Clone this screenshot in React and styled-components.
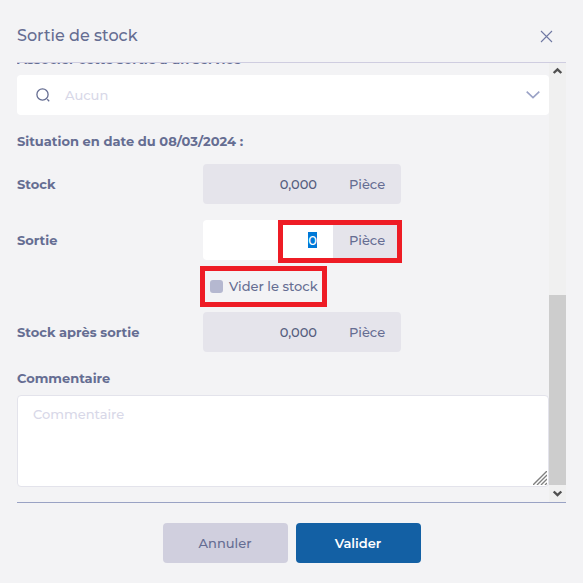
import React, { useEffect, useRef, useState } from "react";
import styled, { createGlobalStyle } from "styled-components";

const GlobalStyle = createGlobalStyle`
  * {
    box-sizing: border-box;
  }
  body {
    margin: 0;
    background: #f3f3f5;
    color: #656d92;
    font-family: Montserrat, Inter, sans-serif;
    font-size: 13px;
    font-weight: 500;
    line-height: 20px;
  }
  button,
  input,
  textarea {
    font: inherit;
  }
`;

const Modal = styled.div`
  height: 100vh;
  padding: 0 17px;
  display: flex;
  flex-direction: column;
`;
const Header = styled.header`
  height: 63px;
  padding: 10px 13px 0 0;
  display: flex;
  align-items: center;
  justify-content: space-between;
  border-bottom: 1px solid #cfcde0;
`;
const Title = styled.h1`
  margin: 0;
  font-size: 16px;
  font-weight: 500;
`;
const IconButton = styled.button`
  display: flex;
  padding: 0;
  border: 0;
  background: none;
  color: ${(p) => p.$color || "#6f78a2"};
`;
const Body = styled.main`
  flex: 1;
  min-height: 0;
  display: flex;
`;
const Content = styled.form`
  flex: 1;
  min-width: 0;
  padding-bottom: 15px;
  display: flex;
  flex-direction: column;
  justify-content: flex-end;
  overflow: hidden;
  & > * {
    flex-shrink: 0;
  }
`;
const Label = styled.label`
  font-weight: 700;
`;
const SelectBox = styled.div`
  height: 40px;
  margin: 6px 0 16px;
  padding: 0 9px 0 19px;
  display: flex;
  align-items: center;
  gap: 14px;
  border-radius: 4px;
  background: #fff;
`;
const SearchInput = styled.input`
  flex: 1;
  min-width: 0;
  padding: 0;
  border: 0;
  outline: none;
  background: none;
  color: #656d92;
  &::placeholder {
    color: #d8d8e8;
  }
`;
const Heading = styled.h2`
  margin: 0 0 13px;
  font-size: 13px;
  font-weight: 700;
  line-height: 20px;
`;
const Row = styled.div`
  display: grid;
  grid-template-columns: 186px 1fr;
  align-items: center;
`;
const SpacedRow = styled(Row)`
  margin-top: 16px;
`;
const Field = styled.div`
  position: relative;
  width: 198px;
  height: 40px;
  display: flex;
`;
const Amount = styled.input`
  width: 130px;
  padding: 0 16px;
  border: 0;
  border-radius: 4px 0 0 4px;
  outline: none;
  background: ${(p) => (p.readOnly ? "#e5e4eb" : "#fff")};
  color: #565e7e;
  line-height: 16px;
  text-align: right;
  &::selection {
    background: #0078d7;
    color: #fff;
  }
`;
const Unit = styled.span`
  flex: 1;
  display: flex;
  align-items: center;
  justify-content: center;
  border-radius: 0 4px 4px 0;
  background: #e5e4eb;
`;
const FieldMark = styled.div`
  position: absolute;
  top: 0;
  right: -1px;
  width: 124px;
  height: 43px;
  border: 5px solid #ee1c25;
  pointer-events: none;
`;
const CheckRow = styled.div`
  height: 52px;
  padding-left: 183px;
  display: flex;
  align-items: center;
`;
const CheckLabel = styled.label`
  width: 127px;
  height: 41px;
  padding-left: 5px;
  display: flex;
  align-items: center;
  gap: 6px;
  border: 5px solid #ee1c25;
  white-space: nowrap;
`;
const Checkbox = styled.input`
  appearance: none;
  width: 13px;
  height: 13px;
  margin: 0;
  flex-shrink: 0;
  border-radius: 3px;
  background: #b5b8d0;
  &:checked {
    background: #1360a4;
  }
`;
const CommentLabel = styled(Label)`
  margin-top: 16px;
`;
const CommentBox = styled.div`
  position: relative;
  margin-top: 7px;
  display: flex;
`;
const Comment = styled.textarea`
  width: 100%;
  height: 92px;
  padding: 8px 15px;
  border: 1px solid #e3e3eb;
  border-radius: 4px;
  outline: none;
  resize: none;
  background: #fff;
  color: #656d92;
  &::placeholder {
    color: #d8d8e8;
  }
`;
const Grip = styled.svg`
  position: absolute;
  right: 2px;
  bottom: 2px;
`;
const Scrollbar = styled.div`
  width: 17px;
  display: flex;
  flex-direction: column;
  align-items: center;
  background: #f0f0f0;
`;
const Track = styled.div`
  flex: 1;
  width: 100%;
  display: flex;
  flex-direction: column;
  justify-content: flex-end;
`;
const Thumb = styled.div`
  height: 47%;
  background: #cdcdcd;
`;
const Footer = styled.footer`
  height: 81px;
  padding-top: 20px;
  display: flex;
  justify-content: center;
  align-items: flex-start;
  gap: 8px;
  border-top: 1px solid #99a2c4;
`;
const Button = styled.button`
  width: 125px;
  height: 40px;
  border: 0;
  border-radius: 4px;
  font-weight: ${(p) => (p.$primary ? 600 : 500)};
  background: ${(p) => (p.$primary ? "#1360a4" : "#d0cfde")};
  color: ${(p) => (p.$primary ? "#fff" : "#656d92")};
`;

function ScrollArrow({ down }) {
  return (
    <IconButton type="button" $color="#505050" aria-label={down ? "Défiler vers le bas" : "Défiler vers le haut"}>
      <svg width="17" height="17" viewBox="0 0 17 17" fill="none" stroke="currentColor" strokeWidth="2.4">
        <path d={down ? "M4.7 6.5 8.5 10.2 12.3 6.5" : "M4.7 10 8.5 6.3 12.3 10"} />
      </svg>
    </IconButton>
  );
}

function AmountField({ mark, inputRef, ...props }) {
  return (
    <Field>
      <Amount ref={inputRef} {...props} />
      <Unit>Pièce</Unit>
      {mark && <FieldMark />}
    </Field>
  );
}

function App() {
  const [sortie, setSortie] = useState("0");
  const sortieRef = useRef(null);

  useEffect(() => {
    sortieRef.current.focus();
    sortieRef.current.select();
  }, []);

  return (
    <Modal>
      <GlobalStyle />
      <Header>
        <Title>Sortie de stock</Title>
        <IconButton type="button" aria-label="Fermer">
          <svg width="13" height="13" viewBox="0 0 13 13" fill="none" stroke="currentColor" strokeWidth="1.1">
            <path d="M1 1l11 11M12 1 1 12" />
          </svg>
        </IconButton>
      </Header>
      <Body>
        <Content id="sortie-form">
          <Label htmlFor="service">Associer cette sortie à un service</Label>
          <SelectBox>
            <svg width="15" height="15" viewBox="0 0 15 15" fill="none" stroke="#656d92" strokeWidth="1.3">
              <circle cx="6.5" cy="6.5" r="5.6" />
              <path d="M11.3 11.3 13.2 13.2" />
            </svg>
            <SearchInput id="service" placeholder="Aucun" />
            <svg width="14" height="8" viewBox="0 0 14 8" fill="none" stroke="#9aa2c6" strokeWidth="1.6">
              <path d="M.7.7 7 6.7 13.3.7" />
            </svg>
          </SelectBox>
          <Heading>Situation en date du 08/03/2024 :</Heading>
          <Row>
            <Label htmlFor="stock">Stock</Label>
            <AmountField id="stock" value="0,000" readOnly />
          </Row>
          <SpacedRow>
            <Label htmlFor="sortie">Sortie</Label>
            <AmountField
              id="sortie"
              mark
              inputRef={sortieRef}
              value={sortie}
              onChange={(e) => setSortie(e.target.value)}
            />
          </SpacedRow>
          <CheckRow>
            <CheckLabel>
              <Checkbox type="checkbox" />
              Vider le stock
            </CheckLabel>
          </CheckRow>
          <Row>
            <Label htmlFor="after">Stock après sortie</Label>
            <AmountField id="after" value="0,000" readOnly />
          </Row>
          <CommentLabel htmlFor="comment">Commentaire</CommentLabel>
          <CommentBox>
            <Comment id="comment" placeholder="Commentaire" />
            <Grip width="14" height="14" viewBox="0 0 14 14" fill="none" stroke="#808080" strokeWidth="1.4">
              <path d="M0 14 14 0M4 14 14 4M8 14l6-6M12 14l2-2" />
            </Grip>
          </CommentBox>
        </Content>
        <Scrollbar>
          <ScrollArrow />
          <Track>
            <Thumb />
          </Track>
          <ScrollArrow down />
        </Scrollbar>
      </Body>
      <Footer>
        <Button type="button">Annuler</Button>
        <Button type="submit" form="sortie-form" $primary>Valider</Button>
      </Footer>
    </Modal>
  );
}

export default App;
